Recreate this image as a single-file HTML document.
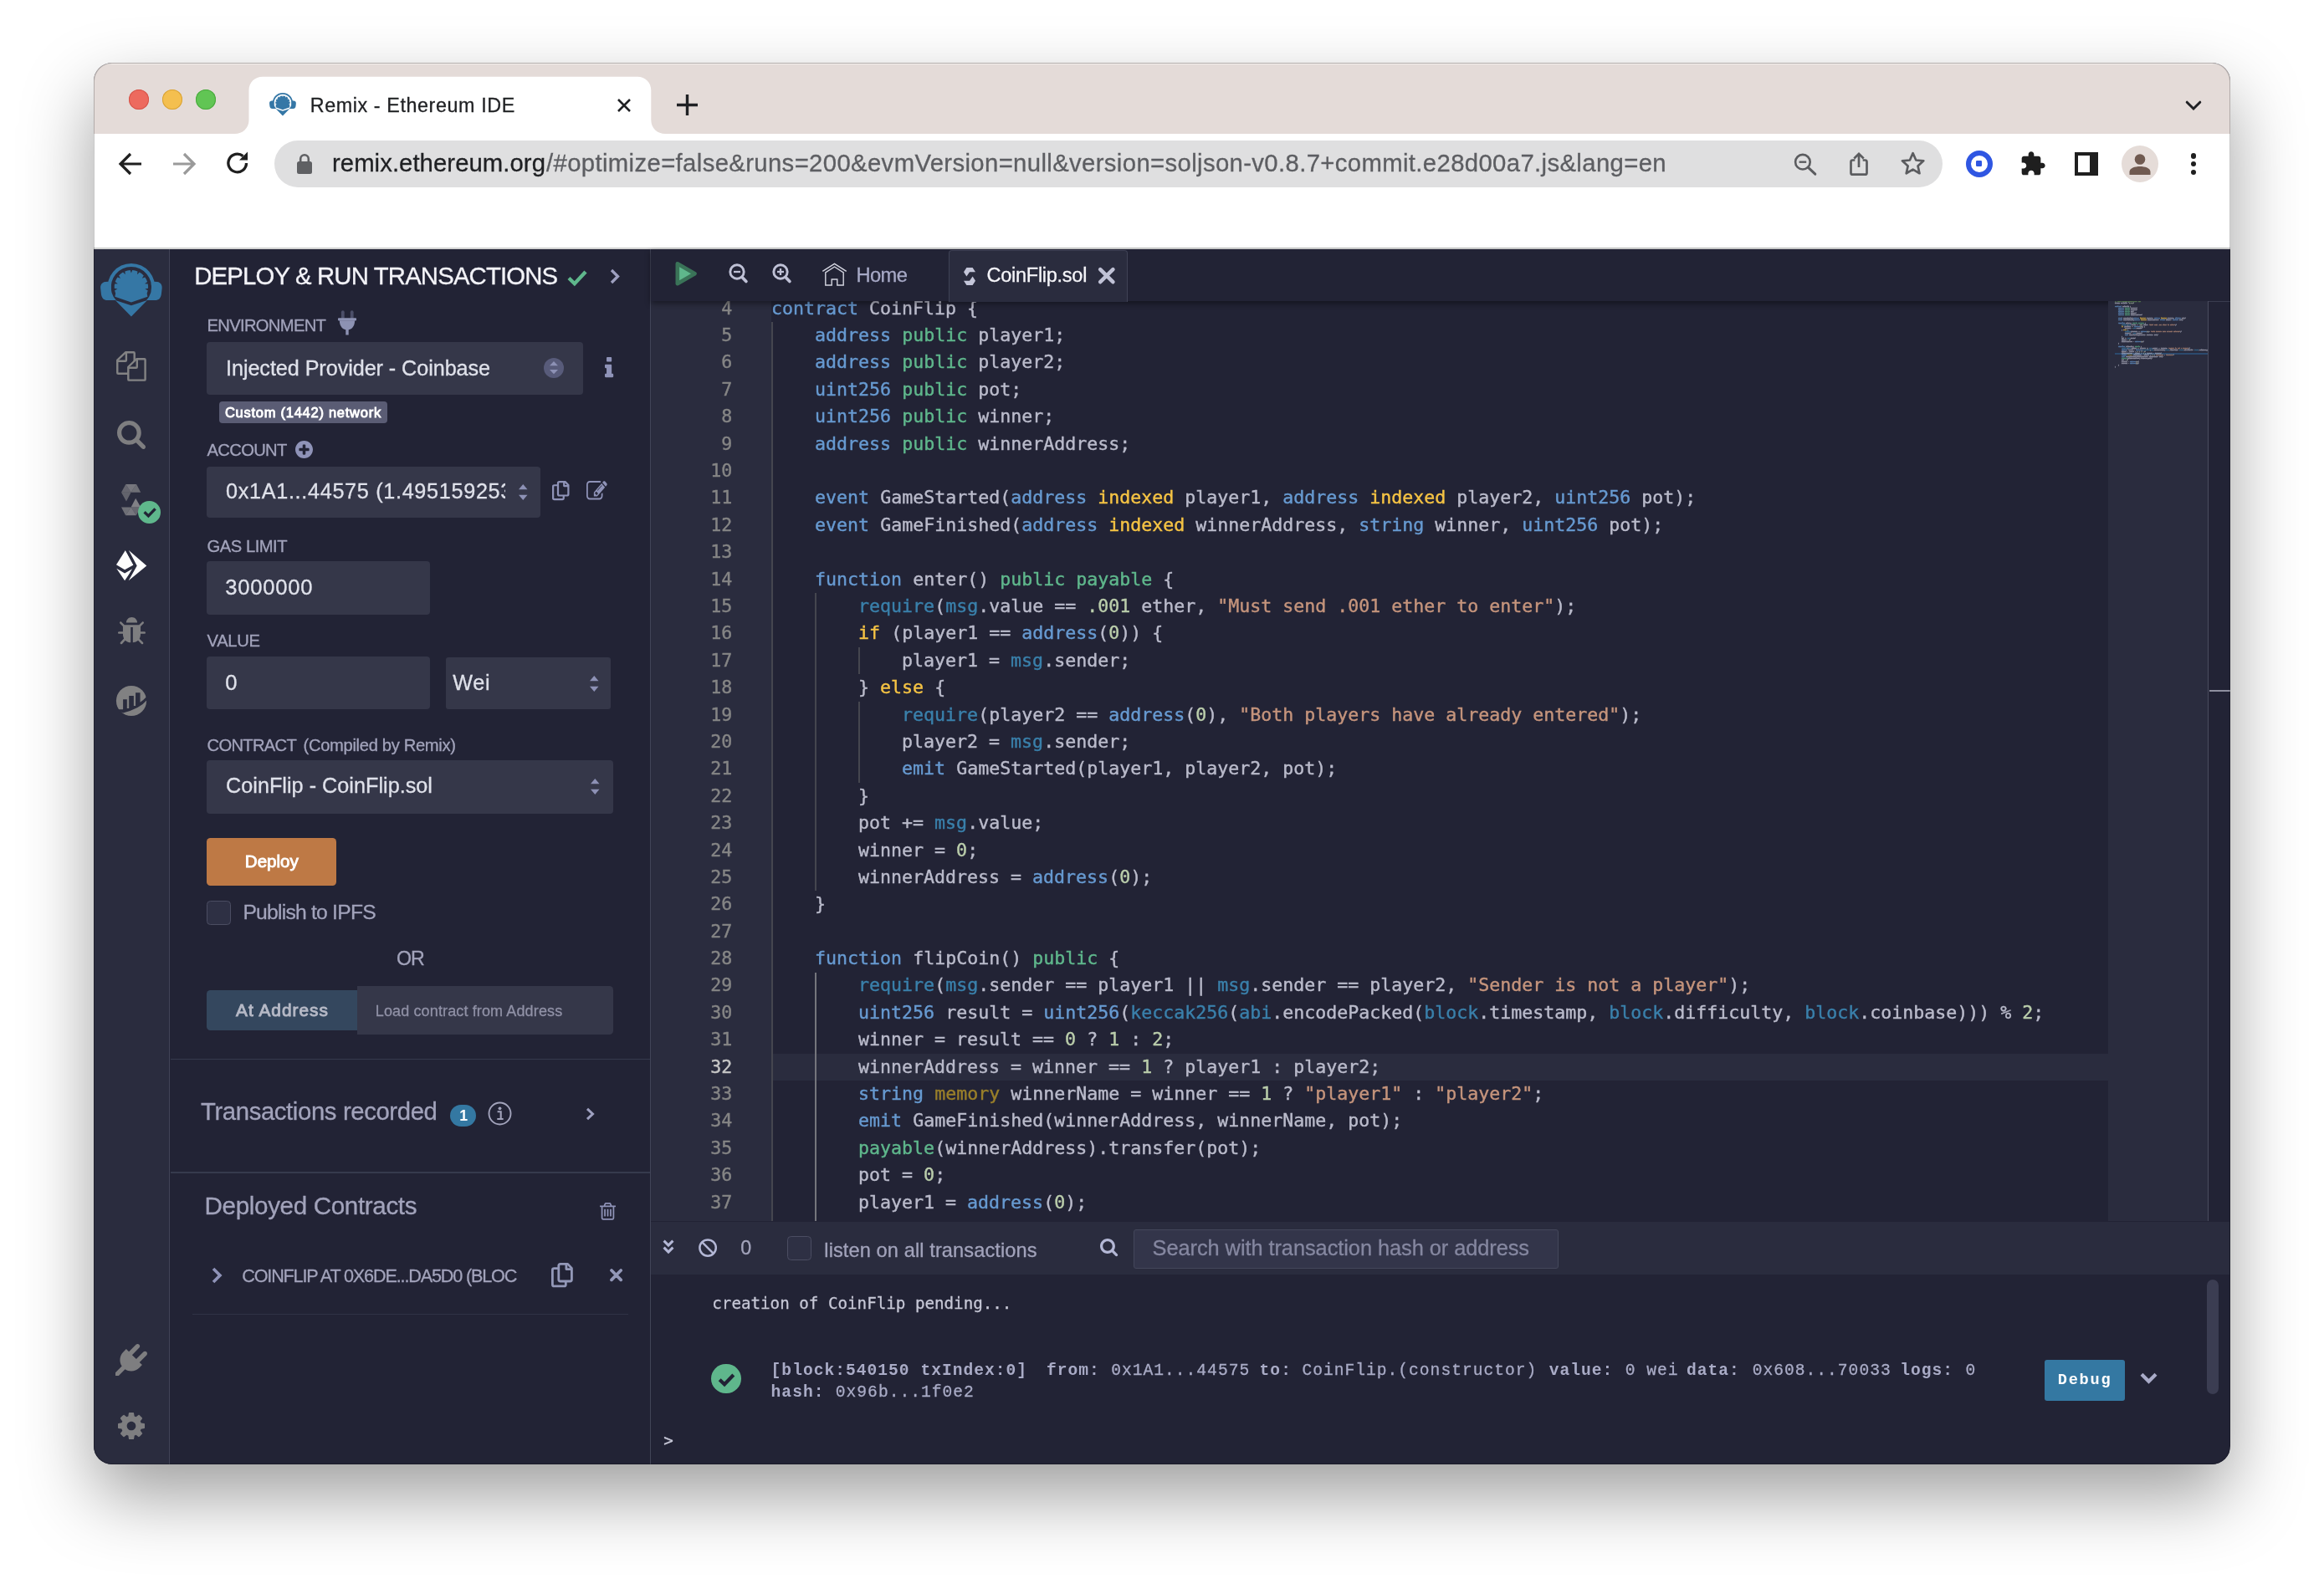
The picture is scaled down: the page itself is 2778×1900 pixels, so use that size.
<!DOCTYPE html>
<html lang="en"><head><meta charset="utf-8"><title>Remix - Ethereum IDE</title>
<style>
html,body{margin:0;padding:0;background:#fff;}
body{width:2778px;height:1900px;overflow:hidden;position:relative;font-family:"Liberation Sans",sans-serif;}
#win{position:absolute;left:112px;top:75px;width:2554px;height:1676px;border-radius:22px;overflow:hidden;background:#222335;
 box-shadow:0 38px 85px rgba(0,0,0,.38);}
#o{position:absolute;left:-112px;top:-75px;width:2778px;height:1900px;will-change:transform;}
#o div,#o svg.i,#o pre,.t{position:absolute;}
.t{white-space:pre;margin:0;padding:0;-webkit-text-stroke:0.3px;}
svg.i{overflow:visible;}
#ring{position:absolute;left:0;top:0;right:0;bottom:0;border-radius:22px;box-shadow:inset 0 0 0 1px rgba(0,0,0,.21);}
.code,.nums{-webkit-text-stroke:0.4px;margin:0;font:21.6px/32.4px 'DejaVu Sans Mono','Liberation Mono',monospace;color:#babbcb;white-space:pre;}
.code .cl,.nums .ln{position:static !important;height:32.4px;}
.nums{text-align:right;color:#858585;}
.nums .cur{color:#c6c6c6;}
.code span{position:static;}
.k{color:#679ad1}.g{color:#5fb78c}.y{color:#f5c344}.l{color:#997f2a}.m{color:#3a80ab}.s{color:#c5947c}.n{color:#bacdab}
.c{color:#6a9955}

</style></head>
<body>
<div id="win"><div id="o">
<div style="left:112px;top:75px;width:2554px;height:85px;background:#e4dbd8;"></div>
<div style="left:112px;top:76px;width:2554px;height:1px;background:rgba(255,255,255,.55);"></div>
<div style="left:112px;top:160px;width:2554px;height:138px;background:#ffffff;"></div>
<div style="left:112px;top:296px;width:2554px;height:1px;background:#cbcccb;"></div>
<div style="left:112px;top:297px;width:2554px;height:1px;background:#d9d9d9;"></div>
<div style="left:153.7px;top:107px;width:24px;height:24px;background:#ed6a5e;border-radius:50%;box-shadow:inset 0 0 0 1px #d5544a;"></div>
<div style="left:193.7px;top:107px;width:24px;height:24px;background:#f4bf4f;border-radius:50%;box-shadow:inset 0 0 0 1px #d8a236;"></div>
<div style="left:233.8px;top:107px;width:24px;height:24px;background:#61c554;border-radius:50%;box-shadow:inset 0 0 0 1px #4aa93e;"></div>
<svg class="i" style="left:0px;top:0px;width:2778px;height:200px;" viewBox="0 0 2778 200"><path fill="#fff" d="M280.5 160 C290 160 297.500 153.500 297.500 143.500 L297.500 108 C297.500 98.500 304.500 91.700 314 91.700 L761.800 91.700 C771.300 91.700 778.300 98.500 778.300 108 L778.300 143.500 C778.300 153.500 785.800 160 795.300 160 Z"/></svg>
<svg class="i" style="left:322px;top:111.4px;width:32px;height:27.7px" viewBox="0 0 74 64" fill="#3577a6"><g id="lg0"><path d="M36.90 46.60L17.40 39.80L18.17 35.77A20.2 20.2 0 0 1 17.11 32.26L20.46 30.51L16.76 29.75A20.2 20.2 0 0 1 17.03 24.55L20.79 24.18L17.65 22.09A20.2 20.2 0 0 1 20.43 16.50L24.00 17.75L22.03 14.53A20.2 20.2 0 0 1 27.08 10.55L29.75 13.22L29.37 9.46A20.2 20.2 0 0 1 35.63 8.04L36.90 11.60L38.17 8.04A20.2 20.2 0 0 1 44.43 9.46L44.05 13.22L46.72 10.55A20.2 20.2 0 0 1 51.77 14.53L49.80 17.75L53.37 16.50A20.2 20.2 0 0 1 56.15 22.09L53.01 24.18L56.77 24.55A20.2 20.2 0 0 1 57.04 29.75L53.34 30.51L56.69 32.26A20.2 20.2 0 0 1 55.63 35.77L56.40 39.80Z"/><path d="M17.8 44L36.9 50.300L56 44L36.9 63.500Z"/><path d="M9.03 33.11A28.3 28.3 0 1 1 64.77 33.11L60.73 32.40A24.2 24.2 0 1 0 13.07 32.40Z"/><path d="M13.07 24.00L9.50 21.700L5.80 22.100C1.60 22.600 0.00 26 0.15 29.500L0.90 36.500C1.60 41.500 4.00 44.100 8.50 44.100L18.78 44.100A24.2 24.2 0 0 1 13.07 24.00Z"/><path d="M60.73 24.00L64.30 21.700L68.00 22.100C72.20 22.600 73.80 26 73.65 29.500L72.90 36.500C72.20 41.500 69.80 44.100 65.30 44.100L55.02 44.100A24.2 24.2 0 0 0 60.73 24.00Z"/></g></svg>
<span class="t" style="left:370.8px;top:126.12px;font:400 23.3px/0 'Liberation Sans', sans-serif;color:#1f2023;letter-spacing:0.598px;">Remix - Ethereum IDE</span>
<svg class="i" style="left:737px;top:117px;width:18px;height:18px;" viewBox="0 0 18 18"><path d="M2 2 L16 16 M16 2 L2 16" stroke="#202124" stroke-width="2.6" fill="none"/></svg>
<svg class="i" style="left:808px;top:112px;width:27px;height:27px;" viewBox="0 0 27 27"><path d="M13.5 1 V26 M1 13.5 H26" stroke="#202124" stroke-width="3.4" fill="none"/></svg>
<svg class="i" style="left:2612px;top:120.3px;width:20px;height:12px;" viewBox="0 0 20 12"><path d="M2.2 2.200 L10 10 L17.800 2.200" stroke="#202124" stroke-width="3" fill="none" stroke-linecap="round"/></svg>
<svg class="i" style="left:141px;top:181px;width:30px;height:30px;" viewBox="0 0 30 30"><path d="M28 15 H4 M15 3 L3 15 L15 27" stroke="#1f1f1f" stroke-width="3.2" fill="none"/></svg>
<svg class="i" style="left:205px;top:181px;width:30px;height:30px;" viewBox="0 0 30 30"><path d="M2 15 H26 M15 3 L27 15 L15 27" stroke="#9a9a9a" stroke-width="3.2" fill="none"/></svg>
<svg class="i" style="left:269px;top:180px;width:30px;height:30px;" viewBox="0 0 30 30"><path d="M25.5 15 A10.8 10.8 0 1 1 21.5 6.6" stroke="#1f1f1f" stroke-width="3.3" fill="none"/><path d="M27 1.5 V11.5 H17 Z" fill="#1f1f1f"/></svg>
<div style="left:328px;top:168px;width:1994px;height:56px;background:#dfdfe0;border-radius:28px;"></div>
<svg class="i" style="left:355px;top:183px;width:18px;height:25px;" viewBox="0 0 18 25"><rect x="0" y="10" width="18" height="15" rx="2.5" fill="#5f6063"/><path d="M4.2 11 V7 A4.8 4.8 0 0 1 13.8 7 V11" stroke="#5f6063" stroke-width="2.6" fill="none"/></svg>
<span class="t" style="left:397px;top:195.44px;font:400 29.3px/0 'Liberation Sans', sans-serif;color:#1f2023;letter-spacing:0.055px;">remix.ethereum.org</span>
<span class="t" style="left:653px;top:195.44px;font:400 29.3px/0 'Liberation Sans', sans-serif;color:#5d5e62;letter-spacing:0.361px;">/#optimize=false&amp;runs=200&amp;evmVersion=null&amp;version=soljson-v0.8.7+commit.e28d00a7.js&amp;lang=en</span>
<svg class="i" style="left:2142px;top:180px;width:34px;height:34px;" viewBox="0 0 34 34"><circle cx="12.9" cy="13.700" r="8.800" stroke="#5b5c5f" stroke-width="2.6" fill="none"/><path d="M19.3 20.100 L27.800 28.200" stroke="#5b5c5f" stroke-width="3" stroke-linecap="round"/><path d="M8.6 13.700 H17.200" stroke="#5b5c5f" stroke-width="2.4"/></svg>
<svg class="i" style="left:2209px;top:176px;width:26px;height:36px;" viewBox="0 0 26 36"><path d="M8.3 15.500 H5.500 Q3.500 15.500 3.500 17.500 V30.700 Q3.500 32.700 5.500 32.700 H20.500 Q22.500 32.700 22.500 30.700 V17.500 Q22.500 15.500 20.500 15.500 H17.700" stroke="#5b5c5f" stroke-width="2.7" fill="none"/><path d="M13 24 V8.500 M7.300 13.500 L13 7.800 L18.700 13.500" stroke="#5b5c5f" stroke-width="2.7" fill="none"/></svg>
<svg class="i" style="left:2271.5px;top:181.1px;width:29.2px;height:28.3px;" viewBox="0 0 34 33"><path d="M17 2.500 L21.300 12.200 L31.800 13.200 L23.900 20.300 L26.200 30.600 L17 25.200 L7.800 30.600 L10.100 20.300 L2.200 13.200 L12.700 12.200 Z" stroke="#5b5c5f" stroke-width="3.1" fill="none" stroke-linejoin="round"/></svg>
<div style="left:2349.7px;top:179.5px;width:32px;height:32px;background:#ffffff;border-radius:50%;border:6.3px solid #2f56e2;box-sizing:border-box;"></div>
<div style="left:2362.4px;top:192.2px;width:6.6px;height:6.6px;background:#2f56e2;border-radius:1.2px;"></div>
<svg class="i" style="left:2413.5px;top:179.5px;width:32px;height:32px;" viewBox="0 0 24 24"><path fill="#1f1f1f" d="M20.5 11H19V7c0-1.100-.900-2-2-2h-4V3.500C13 2.120 11.880 1 10.500 1S8 2.120 8 3.500V5H4c-1.100 0-1.990.900-1.990 2v3.800H3.500c1.490 0 2.700 1.210 2.700 2.700s-1.210 2.700-2.700 2.700H2V20c0 1.100.900 2 2 2h3.800v-1.500c0-1.490 1.210-2.700 2.700-2.700 1.490 0 2.700 1.210 2.700 2.700V22H17c1.100 0 2-.900 2-2v-4h1.500c1.380 0 2.500-1.120 2.500-2.500S21.880 11 20.500 11z"/></svg>
<div style="left:2480px;top:182.3px;width:27.5px;height:27.4px;background:#fff;border:4px solid #1f1f1f;box-sizing:border-box;"></div>
<div style="left:2498px;top:182.3px;width:9.5px;height:27.4px;background:#1f1f1f;"></div>
<div style="left:2536px;top:174px;width:44px;height:44px;background:#e5dcd8;border-radius:50%;"></div>
<svg class="i" style="left:2544.2px;top:183.3px;width:28px;height:27px;" viewBox="0 0 28 27"><circle cx="14" cy="7.500" r="6.300" fill="#705a50"/><path d="M1.500 26 V22.500 C1.500 18 8 16 14 16 S26.500 18 26.500 22.500 V26 Z" fill="#705a50"/></svg>
<div style="left:2618.6px;top:183.0px;width:6.6px;height:6.6px;background:#1f1f1f;border-radius:50%;"></div>
<div style="left:2618.6px;top:192.7px;width:6.6px;height:6.6px;background:#1f1f1f;border-radius:50%;"></div>
<div style="left:2618.6px;top:202.5px;width:6.6px;height:6.6px;background:#1f1f1f;border-radius:50%;"></div>
<div style="left:112px;top:298px;width:90px;height:1453px;background:#2a2c3e;"></div>
<div style="left:202px;top:298px;width:1px;height:1453px;background:#414457;"></div>
<div style="left:203px;top:298px;width:574.5px;height:1453px;background:#222335;"></div>
<div style="left:777px;top:298px;width:1px;height:1453px;background:#414457;"></div>
<svg class="i" style="left:119.6px;top:314.8px;width:74px;height:64px" viewBox="0 0 74 64" fill="#3577a5"><g id="lg1"><path d="M36.90 46.60L17.40 39.80L18.17 35.77A20.2 20.2 0 0 1 17.11 32.26L20.46 30.51L16.76 29.75A20.2 20.2 0 0 1 17.03 24.55L20.79 24.18L17.65 22.09A20.2 20.2 0 0 1 20.43 16.50L24.00 17.75L22.03 14.53A20.2 20.2 0 0 1 27.08 10.55L29.75 13.22L29.37 9.46A20.2 20.2 0 0 1 35.63 8.04L36.90 11.60L38.17 8.04A20.2 20.2 0 0 1 44.43 9.46L44.05 13.22L46.72 10.55A20.2 20.2 0 0 1 51.77 14.53L49.80 17.75L53.37 16.50A20.2 20.2 0 0 1 56.15 22.09L53.01 24.18L56.77 24.55A20.2 20.2 0 0 1 57.04 29.75L53.34 30.51L56.69 32.26A20.2 20.2 0 0 1 55.63 35.77L56.40 39.80Z"/><path d="M17.8 44L36.9 50.300L56 44L36.9 63.500Z"/><path d="M9.03 33.11A28.3 28.3 0 1 1 64.77 33.11L60.73 32.40A24.2 24.2 0 1 0 13.07 32.40Z"/><path d="M13.07 24.00L9.50 21.700L5.80 22.100C1.60 22.600 0.00 26 0.15 29.500L0.90 36.500C1.60 41.500 4.00 44.100 8.50 44.100L18.78 44.100A24.2 24.2 0 0 1 13.07 24.00Z"/><path d="M60.73 24.00L64.30 21.700L68.00 22.100C72.20 22.600 73.80 26 73.65 29.500L72.90 36.500C72.20 41.500 69.80 44.100 65.30 44.100L55.02 44.100A24.2 24.2 0 0 0 60.73 24.00Z"/></g></svg>
<svg class="i" style="left:139px;top:420px;width:36px;height:36px;" viewBox="0 0 36 36"><g stroke="#838384" stroke-width="2.4" fill="none" stroke-linejoin="round" stroke-linecap="round"><path d="M11.3 1.200 H20.700 Q21.700 1.200 21.700 2.200 V26.700 H2.250 Q1.250 26.700 1.250 25.700 V10.600 Z"/><path d="M1.6 11.700 H10.900 Q11.900 11.700 11.900 10.700 V1.500"/><path fill="#2a2c3e" d="M24.2 9.250 H33.600 Q34.600 9.250 34.600 10.250 V33.650 Q34.600 34.650 33.600 34.650 H15.300 Q14.300 34.650 14.300 33.650 V18.750 Z"/><path d="M14.6 19.700 H23.800 Q24.800 19.700 24.800 18.700 V9.600"/></g></svg>
<svg class="i" style="left:140.00px;top:502.50px;width:34.00px;height:34.00px;" viewBox="0 -1408 1664 1664" preserveAspectRatio="none"><path fill="#7e7e80" transform="scale(1,-1)" d="M1152 704C1152 457 951 256 704 256C457 256 256 457 256 704C256 951 457 1152 704 1152C951 1152 1152 951 1152 704ZM1664 -128C1664 -94 1650 -61 1627 -38L1284 305C1365 422 1408 562 1408 704C1408 1093 1093 1408 704 1408C315 1408 0 1093 0 704C0 315 315 0 704 0C846 0 986 43 1103 124L1446 -218C1469 -242 1502 -256 1536 -256C1606 -256 1664 -198 1664 -128Z"/></svg>
<svg class="i" style="left:145px;top:579px;width:23.2px;height:37.2px;" viewBox="0 0 23.200 37.200"><g fill="#8b8b8e"><path opacity=".62" d="M5.3 0 L0 9.800 H11.600 Z"/><path opacity=".8" d="M5.3 0 H18.100 L11.600 9.800 Z"/><path opacity=".7" d="M18.1 0 L23.200 9.800 H11.600 Z"/><path opacity=".58" d="M0 9.800 H11.600 L6 20.400 Z"/><path opacity=".62" d="M17.900 37.200 L23.200 27.400 H11.600 Z"/><path opacity=".8" d="M17.900 37.200 H5.100 L11.600 27.400 Z"/><path opacity=".7" d="M5.100 37.200 L0 27.400 H11.600 Z"/><path opacity=".9" d="M23.200 27.400 H11.600 L17.200 16.800 Z"/></g></svg>
<div style="left:165.3px;top:599.2px;width:26.6px;height:26.6px;background:#5fb78c;border-radius:50%;"></div>
<svg class="i" style="left:170.6px;top:606.4px;width:16px;height:13px;" viewBox="0 0 16 13"><path d="M1.6 6.300 L6.400 11 L14.600 2.400" stroke="#222335" stroke-width="3.3" fill="none" stroke-linecap="butt"/></svg>
<svg class="i" style="left:139px;top:658px;width:36.4px;height:36.4px;" viewBox="0 0 36.400 36.400"><g fill="#fdfdfd"><path d="M10.9 0 L0 17.200 L10.100 23.200 L20.600 17.400 Z"/><path d="M0.3 21.800 L10.100 27.600 L20 21.800 L10.100 36.300 Z"/></g><path d="M12.3 -1 L22.800 18.400 L12.600 37.400" stroke="#2a2c3e" stroke-width="3.2" fill="none"/><path d="M14.9 0 L36.300 18.400 L14.700 36.300 L24.700 18.400 Z" fill="#fdfdfd"/></svg>
<svg class="i" style="left:140.50px;top:738.33px;width:33.00px;height:32.34px;" viewBox="32 -1472 1600 1568" preserveAspectRatio="none"><path fill="#7e7e80" transform="scale(1,-1)" d="M1632 576C1632 611 1603 640 1568 640H1344C1344 768 1344 868 1344 934L1517 1107C1542 1132 1542 1172 1517 1197C1492 1222 1452 1222 1427 1197L1254 1024H410L237 1197C212 1222 172 1222 147 1197C122 1172 122 1132 147 1107L320 934C320 868 320 768 320 640H96C61 640 32 611 32 576C32 541 61 512 96 512H320C320 396 343 307 378 238L176 11C153 -16 155 -56 181 -80C194 -91 209 -96 224 -96C242 -96 259 -89 272 -75L455 132C455 132 587 0 768 0V896H896V0C1066 0 1197 120 1197 120L1395 -77C1407 -90 1424 -96 1440 -96C1456 -96 1473 -90 1485 -77C1510 -52 1510 -12 1485 13L1277 222C1317 293 1344 387 1344 512H1568C1603 512 1632 541 1632 576ZM1152 1152C1152 1329 1009 1472 832 1472C655 1472 512 1329 512 1152H1152Z"/></svg>
<svg class="i" style="left:139px;top:820px;width:36px;height:36px;" viewBox="0 0 36 36"><circle cx="18" cy="18" r="18.100" fill="#818182"/><path fill="#2a2c3e" d="M1.500 28.200 H8.100 V16.200 H12.800 V26.900 H15.200 V12.100 H20.850 V24.100 H23.050 V8.200 H28.550 V19.700 Q32.500 17 36.800 12.400 L37.200 16.600 Q28 27.800 8.100 32.400 Q3.500 31 1.500 28.200 Z"/></svg>
<svg class="i" style="left:138px;top:1607px;width:38px;height:38px" viewBox="0 -1536 1792 1792"><path fill="#7e7e80" transform="scale(1,-1)" d="M1755 1083C1705 1133 1624 1133 1574 1083L1173 683L939 917L1339 1318C1389 1367 1389 1449 1339 1499C1289 1548 1208 1548 1158 1499L758 1098L608 1248L448 1088C229 869 198 535 362 287L0 -75V-256H181L543 106C791 -58 1125 -27 1344 192L1504 352L1354 502L1755 902C1804 952 1804 1033 1755 1083Z"/></svg>
<svg class="i" style="left:141.00px;top:1689.00px;width:32.00px;height:32.00px;" viewBox="0 -1408 1536 1536" preserveAspectRatio="none"><path fill="#7e7e80" transform="scale(1,-1)" d="M1024 640C1024 499 909 384 768 384C627 384 512 499 512 640C512 781 627 896 768 896C909 896 1024 781 1024 640ZM1536 749C1536 766 1524 782 1507 785L1324 813C1314 846 1300 879 1283 911C1317 958 1354 1002 1388 1048C1393 1055 1396 1062 1396 1071C1396 1079 1394 1087 1389 1093C1347 1152 1277 1214 1224 1263C1217 1269 1208 1273 1199 1273C1190 1273 1181 1270 1175 1264L1033 1157C1004 1172 974 1184 943 1194L915 1378C913 1395 897 1408 879 1408H657C639 1408 625 1396 621 1380C605 1320 599 1255 592 1194C561 1184 530 1171 501 1156L363 1263C355 1269 346 1273 337 1273C303 1273 168 1127 144 1094C139 1087 135 1080 135 1071C135 1062 139 1054 145 1047C182 1002 218 957 252 909C236 879 223 849 213 817L27 789C12 786 0 768 0 753V531C0 514 12 498 29 495L212 468C222 434 236 401 253 369C219 322 182 278 148 232C143 225 140 218 140 209C140 201 142 193 147 186C189 128 259 66 312 18C319 11 328 7 337 7C346 7 355 10 362 16L503 123C532 108 562 96 593 86L621 -98C623 -115 639 -128 657 -128H879C897 -128 911 -116 915 -100C931 -40 937 25 944 86C975 96 1006 109 1035 124L1173 16C1181 11 1190 7 1199 7C1233 7 1368 154 1392 186C1398 193 1401 200 1401 209C1401 218 1397 227 1391 234C1354 279 1318 323 1284 372C1300 401 1312 431 1323 463L1508 491C1524 494 1536 512 1536 527Z"/></svg>
<span class="t" style="left:232.3px;top:330.14px;font:400 29.3px/0 'Liberation Sans', sans-serif;color:#f3f3f8;letter-spacing:-0.830px;">DEPLOY &amp; RUN TRANSACTIONS</span>
<svg class="i" style="left:677.5px;top:322px;width:24px;height:20px;" viewBox="0 0 24 20"><path d="M2 10.500 L8.800 17.200 L22 3" stroke="#5fb78c" stroke-width="4.4" fill="none"/></svg>
<svg class="i" style="left:729px;top:321px;width:12px;height:19px;" viewBox="0 0 12 19"><path d="M2 2 L9.500 9.500 L2 17" stroke="#9ea0c0" stroke-width="3.3" fill="none"/></svg>
<span class="t" style="left:247.6px;top:389.0px;font:400 20.2px/0 'Liberation Sans', sans-serif;color:#a2a3bb;letter-spacing:-0.688px;">ENVIRONMENT</span>
<svg class="i" style="left:404.2px;top:370.5px;width:22px;height:30px;" viewBox="0 0 22 30"><rect x="3.9" y="0.300" width="3.800" height="10" rx="1.900" fill="#4c4f69"/><rect x="14.8" y="0.300" width="3.800" height="10" rx="1.900" fill="#4c4f69"/><rect x="0" y="9.300" width="22" height="3.100" rx="0.800" fill="#8d92b3"/><path d="M1.9 12.300 H20.100 C20.100 19.800 15.800 23.500 11 23.500 C6.200 23.500 1.900 19.800 1.900 12.300 Z" fill="#8d92b3"/><rect x="9.300" y="22.800" width="3.400" height="6.700" fill="#8d92b3"/></svg>
<div style="left:247px;top:409.3px;width:449.7px;height:63.2px;background:#353749;border-radius:4px;"></div>
<span class="t" style="left:270px;top:439.96px;font:400 25.2px/0 'Liberation Sans', sans-serif;color:#dfe1ea;letter-spacing:-0.065px;">Injected Provider - Coinbase</span>
<div style="left:649.7px;top:427.7px;width:24px;height:24px;background:#585b7a;border-radius:50%;"></div>
<svg class="i" style="left:656.7px;top:432.09999999999997px;width:10px;height:15.2px;" viewBox="0 0 10 15.2"><path d="M0 5.3 L5.0 0 L10 5.3 Z M0 9.899999999999999 L5.0 15.2 L10 9.899999999999999 Z" fill="#8d91b5"/></svg>
<svg class="i" style="left:723.20px;top:427.00px;width:10.20px;height:24.20px;" viewBox="0 -1408 640 1408" preserveAspectRatio="none"><path fill="#8f93b8" transform="scale(1,-1)" d="M640 192C640 227 611 256 576 256H512V832C512 867 483 896 448 896H64C29 896 0 867 0 832V704C0 669 29 640 64 640H128V256H64C29 256 0 227 0 192V64C0 29 29 0 64 0H576C611 0 640 29 640 64ZM512 1344C512 1379 483 1408 448 1408H192C157 1408 128 1379 128 1344V1152C128 1117 157 1088 192 1088H448C483 1088 512 1117 512 1152Z"/></svg>
<div style="left:262px;top:480.4px;width:201px;height:25.3px;background:#5a5c74;border-radius:4px;"></div>
<span class="t" style="left:268.9px;top:493.18px;font:400 16.5px/0 'Liberation Sans', sans-serif;color:#ffffff;letter-spacing:0.738px;-webkit-text-stroke:0.9px;">Custom (1442) network</span>
<span class="t" style="left:247.6px;top:538.4px;font:400 20.2px/0 'Liberation Sans', sans-serif;color:#a2a3bb;letter-spacing:-0.690px;">ACCOUNT</span>
<svg class="i" style="left:352.50px;top:526.50px;width:21.00px;height:21.00px;" viewBox="0 -1408 1536 1536" preserveAspectRatio="none"><path fill="#8f93b8" transform="scale(1,-1)" d="M1216 576C1216 541 1187 512 1152 512H896V256C896 221 867 192 832 192H704C669 192 640 221 640 256V512H384C349 512 320 541 320 576V704C320 739 349 768 384 768H640V1024C640 1059 669 1088 704 1088H832C867 1088 896 1059 896 1024V768H1152C1187 768 1216 739 1216 704V576ZM1536 640C1536 1064 1192 1408 768 1408C344 1408 0 1064 0 640C0 216 344 -128 768 -128C1192 -128 1536 216 1536 640Z"/></svg>
<div style="left:247px;top:558px;width:398.8px;height:60.6px;background:#353749;border-radius:4px;"></div>
<div style="left:270px;top:566px;width:335px;height:46px;overflow:hidden;"></div>
<span class="t" style="left:270px;top:586.96px;font:400 25.2px/0 'Liberation Sans', sans-serif;color:#dfe1ea;letter-spacing:0.695px;">0x1A1...44575 (1.495159253</span>
<div style="left:604px;top:560px;width:41.8px;height:56px;background:#353749;"></div>
<svg class="i" style="left:620.35px;top:578.5px;width:10.5px;height:19.0px;" viewBox="0 0 10.5 19.0"><path d="M0 6.2 L5.25 0 L10.5 6.2 Z M0 12.8 L5.25 19.0 L10.5 12.8 Z" fill="#8d91b5"/></svg>
<svg class="i" style="left:659.5px;top:574.7px;width:20.5px;height:23.3px;" viewBox="0 0 25.800 29.300"><g stroke="#8f93b8" stroke-width="2.8" fill="none" stroke-linejoin="round"><path d="M10.8 1.400 H19.600 L24.400 6.400 V20 Q24.400 22 22.400 22 H10.800 Q8.800 22 8.800 20 V3.400 Q8.800 1.400 10.800 1.400 Z"/><path d="M17.9 1.400 V7.600 H24.400"/><path d="M8.8 6.600 H3.400 Q1.400 6.600 1.400 8.600 V25.900 Q1.400 27.900 3.400 27.900 H15.300 Q17.300 27.900 17.300 25.900 V22"/></g></svg>
<svg class="i" style="left:701.00px;top:575.40px;width:24.70px;height:22.60px;" viewBox="0 -1408 1783.75 1408" preserveAspectRatio="none"><path fill="#8f93b8" transform="scale(1,-1)" d="M888 352H832V448H736V504L852 620L1004 468ZM1328 1072C1337 1063 1336 1048 1327 1039L977 689C968 680 953 679 944 688C935 697 936 712 945 721L1295 1071C1304 1080 1319 1081 1328 1072ZM1408 478C1408 491 1400 502 1388 507C1376 512 1363 510 1353 500L1289 436C1283 430 1280 422 1280 414V288C1280 200 1208 128 1120 128H288C200 128 128 200 128 288V1120C128 1208 200 1280 288 1280H1120C1135 1280 1150 1278 1165 1274C1176 1270 1188 1273 1197 1282L1246 1331C1254 1339 1257 1349 1255 1360C1253 1370 1246 1379 1237 1383C1200 1400 1160 1408 1120 1408H288C129 1408 0 1279 0 1120V288C0 129 129 0 288 0H1120C1279 0 1408 129 1408 288ZM1312 1216 640 544V256H928L1600 928ZM1756 1084C1793 1121 1793 1183 1756 1220L1604 1372C1567 1409 1505 1409 1468 1372L1376 1280L1664 992L1756 1084Z"/></svg>
<span class="t" style="left:247.6px;top:652.5px;font:400 20.2px/0 'Liberation Sans', sans-serif;color:#a2a3bb;letter-spacing:-0.483px;">GAS LIMIT</span>
<div style="left:247px;top:671px;width:267px;height:63.6px;background:#353749;border-radius:4px;"></div>
<span class="t" style="left:269.3px;top:701.92px;font:400 25.6px/0 'Liberation Sans', sans-serif;color:#dfe1ea;letter-spacing:0.766px;">3000000</span>
<span class="t" style="left:247.6px;top:765.5px;font:400 20.2px/0 'Liberation Sans', sans-serif;color:#a2a3bb;letter-spacing:-0.341px;">VALUE</span>
<div style="left:247px;top:785.2px;width:267px;height:63.2px;background:#353749;border-radius:4px;"></div>
<span class="t" style="left:269.3px;top:816.12px;font:400 25.6px/0 'Liberation Sans', sans-serif;color:#dfe1ea;">0</span>
<div style="left:532.8px;top:786.4px;width:197px;height:61.4px;background:#353749;border-radius:3px;"></div>
<span class="t" style="left:541.3px;top:815.76px;font:400 25.2px/0 'Liberation Sans', sans-serif;color:#dfe1ea;letter-spacing:0.693px;">Wei</span>
<svg class="i" style="left:704.75px;top:807.5px;width:10.5px;height:19.0px;" viewBox="0 0 10.5 19.0"><path d="M0 6.2 L5.25 0 L10.5 6.2 Z M0 12.8 L5.25 19.0 L10.5 12.8 Z" fill="#8d91b5"/></svg>
<span class="t" style="left:247.6px;top:891.0px;font:400 20.2px/0 'Liberation Sans', sans-serif;color:#a2a3bb;letter-spacing:-0.707px;">CONTRACT</span>
<span class="t" style="left:362.6px;top:891.0px;font:400 20.2px/0 'Liberation Sans', sans-serif;color:#a2a3bb;letter-spacing:-0.340px;">(Compiled by Remix)</span>
<div style="left:247px;top:909px;width:485.8px;height:63.8px;background:#353749;border-radius:4px;"></div>
<span class="t" style="left:270px;top:939.06px;font:400 25.2px/0 'Liberation Sans', sans-serif;color:#dfe1ea;letter-spacing:0.028px;">CoinFlip - CoinFlip.sol</span>
<svg class="i" style="left:706.45px;top:931.0px;width:10.5px;height:19.0px;" viewBox="0 0 10.5 19.0"><path d="M0 6.2 L5.25 0 L10.5 6.2 Z M0 12.8 L5.25 19.0 L10.5 12.8 Z" fill="#8d91b5"/></svg>
<div style="left:247px;top:1002px;width:154.8px;height:56.7px;background:#be7945;border-radius:4.5px;"></div>
<span class="t" style="left:292.8px;top:1030.16px;font:400 20.6px/0 'Liberation Sans', sans-serif;color:#ffffff;letter-spacing:-0.018px;-webkit-text-stroke:0.9px;">Deploy</span>
<div style="left:247px;top:1077.3px;width:29px;height:28.4px;background:#2e3044;border-radius:4.5px;border:1.5px solid #4b4d62;box-sizing:border-box;"></div>
<span class="t" style="left:290.4px;top:1091.44px;font:400 24.7px/0 'Liberation Sans', sans-serif;color:#a2a3bb;letter-spacing:-0.777px;">Publish to IPFS</span>
<span class="t" style="left:474px;top:1145.96px;font:400 23.2px/0 'Liberation Sans', sans-serif;color:#a2a3bb;letter-spacing:-1.141px;">OR</span>
<div style="left:247px;top:1184.3px;width:180px;height:47.3px;background:#34475e;border-radius:4.5px 0 0 4.5px;"></div>
<span class="t" style="left:282px;top:1207.79px;font:400 20.8px/0 'Liberation Sans', sans-serif;color:#b6b9c6;letter-spacing:1.042px;-webkit-text-stroke:0.9px;">At Address</span>
<div style="left:427px;top:1179px;width:305.8px;height:58px;background:#353749;border-radius:0 4.5px 4.5px 0;"></div>
<span class="t" style="left:448.8px;top:1208.76px;font:400 18px/0 'Liberation Sans', sans-serif;color:#9091a6;letter-spacing:0.130px;">Load contract from Address</span>
<div style="left:203.5px;top:1265.5px;width:573.5px;height:1.5px;background:#363a4d;"></div>
<span class="t" style="left:240px;top:1329.24px;font:400 29.3px/0 'Liberation Sans', sans-serif;color:#a2a3bb;letter-spacing:-0.376px;">Transactions recorded</span>
<div style="left:538px;top:1320.7px;width:30.6px;height:26px;background:#3478a2;border-radius:13px;"></div>
<span class="t" style="left:549.3px;top:1334.2px;font:700 17.6px/0 'Liberation Sans', sans-serif;color:#ffffff;-webkit-text-stroke:0;">1</span>
<svg class="i" style="left:582.8px;top:1317.4px;width:29px;height:29px;" viewBox="0 0 29 29"><circle cx="14.5" cy="14.500" r="13" stroke="#a2a3bb" stroke-width="1.9" fill="none"/><circle cx="14.5" cy="8.300" r="1.900" fill="#a2a3bb"/><path d="M11.6 12.300 H15.700 V20.500 M11.300 21 H18.600" stroke="#a2a3bb" stroke-width="2.1" fill="none"/></svg>
<svg class="i" style="left:699.5px;top:1324px;width:11px;height:16px;" viewBox="0 0 11 16"><path d="M2 1.800 L8.500 8 L2 14.200" stroke="#9ea0c0" stroke-width="3" fill="none"/></svg>
<div style="left:203.5px;top:1401.3px;width:573.5px;height:1.5px;background:#363a4d;"></div>
<span class="t" style="left:244.6px;top:1442.04px;font:400 29.6px/0 'Liberation Sans', sans-serif;color:#a2a3bb;letter-spacing:-0.350px;">Deployed Contracts</span>
<svg class="i" style="left:717.00px;top:1437.64px;width:19.00px;height:20.73px;" viewBox="0 -1408 1408 1536" preserveAspectRatio="none"><path fill="#8f93b8" transform="scale(1,-1)" d="M512 800C512 818 498 832 480 832H416C398 832 384 818 384 800V224C384 206 398 192 416 192H480C498 192 512 206 512 224ZM768 800C768 818 754 832 736 832H672C654 832 640 818 640 800V224C640 206 654 192 672 192H736C754 192 768 206 768 224ZM1024 800C1024 818 1010 832 992 832H928C910 832 896 818 896 800V224C896 206 910 192 928 192H992C1010 192 1024 206 1024 224ZM1152 76C1152 28 1125 0 1120 0H288C283 0 256 28 256 76V1024H1152V76ZM480 1152 529 1269C532 1273 540 1279 546 1280H863C868 1279 877 1273 880 1269L928 1152ZM1408 1120C1408 1138 1394 1152 1376 1152H1067L997 1319C977 1368 917 1408 864 1408H544C491 1408 431 1368 411 1319L341 1152H32C14 1152 0 1138 0 1120V1056C0 1038 14 1024 32 1024H128V72C128 -38 200 -128 288 -128H1120C1208 -128 1280 -34 1280 76V1024H1376C1394 1024 1408 1038 1408 1056Z"/></svg>
<svg class="i" style="left:253px;top:1514.5px;width:13px;height:20px;" viewBox="0 0 13 20"><path d="M2 2 L10 10 L2 18" stroke="#8f93b8" stroke-width="3.6" fill="none"/></svg>
<span class="t" style="left:289.2px;top:1526.11px;font:400 21.6px/0 'Liberation Sans', sans-serif;color:#a2a3bb;letter-spacing:-1.149px;">COINFLIP AT 0X6DE...DA5D0 (BLOC</span>
<svg class="i" style="left:659.2px;top:1509.7px;width:25.8px;height:29.3px;" viewBox="0 0 25.800 29.300"><g stroke="#9398b8" stroke-width="2.8" fill="none" stroke-linejoin="round"><path d="M10.8 1.400 H19.600 L24.400 6.400 V20 Q24.400 22 22.400 22 H10.800 Q8.800 22 8.800 20 V3.400 Q8.800 1.400 10.800 1.400 Z"/><path d="M17.9 1.400 V7.600 H24.400"/><path d="M8.8 6.600 H3.400 Q1.400 6.600 1.400 8.600 V25.900 Q1.400 27.900 3.400 27.900 H15.300 Q17.300 27.900 17.300 25.900 V22"/></g></svg>
<svg class="i" style="left:728.8px;top:1517.3px;width:15.2px;height:15.4px;" viewBox="0 0 15.200 15.400"><path d="M2 2 L13.200 13.400 M13.200 2 L2 13.400" stroke="#9398b8" stroke-width="3.7" fill="none" stroke-linecap="round"/></svg>
<div style="left:229.5px;top:1570.5px;width:521px;height:1.3px;background:#2f3245;"></div>
<div style="left:778px;top:298px;width:1887px;height:1453px;background:#222335;"></div>
<div style="left:778px;top:360px;width:144px;height:1100px;background:#2a2c3e;"></div>
<div style="left:922.1px;top:1259.8999999999999px;width:1597.9px;height:32.4px;background:#2a2c3e;"></div>
<div class="codewrap" style="left:778px;top:360px;width:1742px;height:1100px;overflow:hidden"><div class="nums" style="left:0;top:-7.300000000000011px;width:97.20000000000005px"><div class="ln">4</div><div class="ln">5</div><div class="ln">6</div><div class="ln">7</div><div class="ln">8</div><div class="ln">9</div><div class="ln">10</div><div class="ln">11</div><div class="ln">12</div><div class="ln">13</div><div class="ln">14</div><div class="ln">15</div><div class="ln">16</div><div class="ln">17</div><div class="ln">18</div><div class="ln">19</div><div class="ln">20</div><div class="ln">21</div><div class="ln">22</div><div class="ln">23</div><div class="ln">24</div><div class="ln">25</div><div class="ln">26</div><div class="ln">27</div><div class="ln">28</div><div class="ln">29</div><div class="ln">30</div><div class="ln">31</div><div class="ln cur">32</div><div class="ln">33</div><div class="ln">34</div><div class="ln">35</div><div class="ln">36</div><div class="ln">37</div><div class="ln">38</div></div><pre class="code" style="left:144.10000000000002px;top:-7.300000000000011px"><div class="cl"><span class="k">contract</span> CoinFlip {</div><div class="cl">    <span class="k">address</span> <span class="g">public</span> player1;</div><div class="cl">    <span class="k">address</span> <span class="g">public</span> player2;</div><div class="cl">    <span class="k">uint256</span> <span class="g">public</span> pot;</div><div class="cl">    <span class="k">uint256</span> <span class="g">public</span> winner;</div><div class="cl">    <span class="k">address</span> <span class="g">public</span> winnerAddress;</div><div class="cl"> </div><div class="cl">    <span class="k">event</span> GameStarted(<span class="k">address</span> <span class="y">indexed</span> player1, <span class="k">address</span> <span class="y">indexed</span> player2, <span class="k">uint256</span> pot);</div><div class="cl">    <span class="k">event</span> GameFinished(<span class="k">address</span> <span class="y">indexed</span> winnerAddress, <span class="k">string</span> winner, <span class="k">uint256</span> pot);</div><div class="cl"> </div><div class="cl">    <span class="k">function</span> enter() <span class="g">public</span> <span class="g">payable</span> {</div><div class="cl">        <span class="m">require</span>(<span class="m">msg</span>.value == <span class="n">.001</span> ether, <span class="s">"Must send .001 ether to enter"</span>);</div><div class="cl">        <span class="y">if</span> (player1 == <span class="k">address</span>(<span class="n">0</span>)) {</div><div class="cl">            player1 = <span class="m">msg</span>.sender;</div><div class="cl">        } <span class="y">else</span> {</div><div class="cl">            <span class="m">require</span>(player2 == <span class="k">address</span>(<span class="n">0</span>), <span class="s">"Both players have already entered"</span>);</div><div class="cl">            player2 = <span class="m">msg</span>.sender;</div><div class="cl">            <span class="k">emit</span> GameStarted(player1, player2, pot);</div><div class="cl">        }</div><div class="cl">        pot += <span class="m">msg</span>.value;</div><div class="cl">        winner = <span class="n">0</span>;</div><div class="cl">        winnerAddress = <span class="k">address</span>(<span class="n">0</span>);</div><div class="cl">    }</div><div class="cl"> </div><div class="cl">    <span class="k">function</span> flipCoin() <span class="g">public</span> {</div><div class="cl">        <span class="m">require</span>(<span class="m">msg</span>.sender == player1 || <span class="m">msg</span>.sender == player2, <span class="s">"Sender is not a player"</span>);</div><div class="cl">        <span class="k">uint256</span> result = <span class="k">uint256</span>(<span class="m">keccak256</span>(<span class="m">abi</span>.encodePacked(<span class="m">block</span>.timestamp, <span class="m">block</span>.difficulty, <span class="m">block</span>.coinbase))) % <span class="n">2</span>;</div><div class="cl">        winner = result == <span class="n">0</span> ? <span class="n">1</span> : <span class="n">2</span>;</div><div class="cl">        winnerAddress = winner == <span class="n">1</span> ? player1 : player2;</div><div class="cl">        <span class="k">string</span> <span class="l">memory</span> winnerName = winner == <span class="n">1</span> ? <span class="s">"player1"</span> : <span class="s">"player2"</span>;</div><div class="cl">        <span class="k">emit</span> GameFinished(winnerAddress, winnerName, pot);</div><div class="cl">        <span class="g">payable</span>(winnerAddress).transfer(pot);</div><div class="cl">        pot = <span class="n">0</span>;</div><div class="cl">        player1 = <span class="k">address</span>(<span class="n">0</span>);</div><div class="cl">        player2 = <span class="k">address</span>(<span class="n">0</span>);</div></pre><div style="left:144.29999999999995px;top:25.099999999999987px;width:1.8px;height:1134.0px;background:#45464f"></div><div style="left:196.29999999999995px;top:349.09999999999997px;width:1.8px;height:356.4px;background:#45464f"></div><div style="left:196.29999999999995px;top:802.7px;width:1.8px;height:356.4px;background:#74757c"></div><div style="left:248.29999999999995px;top:413.9px;width:1.8px;height:32.4px;background:#45464f"></div><div style="left:248.29999999999995px;top:478.7px;width:1.8px;height:97.19999999999999px;background:#45464f"></div></div>
<div style="left:778px;top:298px;width:1887px;height:62px;background:#222335;box-shadow:0 3px 7px rgba(0,0,0,.42);"></div>
<svg class="i" style="left:805px;top:310px;width:32px;height:34px;" viewBox="0 0 32 34"><path d="M4.8 5.300 L25.600 17.200 L4.800 29.200 Z" fill="#5fb78c" stroke="#3a7358" stroke-width="4.6" stroke-linejoin="round"/></svg>
<svg class="i" style="left:868.5px;top:312.7px;width:26px;height:26px" viewBox="-12 -12 26 26"><circle cx="0" cy="0" r="8.2" stroke="#bfc1d6" stroke-width="2.9" fill="none"/><path d="M6.3 6.800 L10.900 11.500" stroke="#bfc1d6" stroke-width="3.7" stroke-linecap="round"/><path d="M-4 0 H4" stroke="#bfc1d6" stroke-width="2.3"/></svg>
<svg class="i" style="left:920.9px;top:312.7px;width:26px;height:26px" viewBox="-12 -12 26 26"><circle cx="0" cy="0" r="8.2" stroke="#bfc1d6" stroke-width="2.9" fill="none"/><path d="M6.3 6.800 L10.900 11.500" stroke="#bfc1d6" stroke-width="3.7" stroke-linecap="round"/><path d="M-4 0 H4" stroke="#bfc1d6" stroke-width="2.3"/><path d="M0 -4 V4" stroke="#bfc1d6" stroke-width="2.3"/></svg>
<svg class="i" style="left:982px;top:313.5px;width:31px;height:28.5px;" viewBox="0 0 31 28.500"><path d="M1.300 10.400 L15.500 1.400 L29.700 10.400" stroke="#d4d5e0" stroke-width="1.4" fill="none"/><path d="M4.800 11.800 L15.500 5 L26.200 11.800 V27 H18.800 V20 H12.200 V27 H4.800 Z" stroke="#d4d5e0" stroke-width="1.4" fill="none"/></svg>
<span class="t" style="left:1023.4px;top:328.58px;font:400 23.7px/0 'Liberation Sans', sans-serif;color:#a7a9c6;letter-spacing:-0.547px;">Home</span>
<div style="left:1134px;top:298.5px;width:214px;height:62px;background:#2a2c3e;border:1.3px solid #3f4255;border-bottom:none;border-radius:4px 4px 0 0;box-sizing:border-box;"></div>
<svg class="i" style="left:1152.3px;top:320px;width:14px;height:21px;" viewBox="0 0 14 21"><g fill="#c4c6d9"><path d="M3.4 0 H10.600 L14 5.300 H7 L3.400 10.600 L0 5.300 Z"/><path d="M10.6 21 H3.400 L0 15.700 H7 L10.600 10.400 L14 15.700 Z"/></g></svg>
<span class="t" style="left:1179.6px;top:328.75px;font:400 23.5px/0 'Liberation Sans', sans-serif;color:#f5f5f9;letter-spacing:-0.273px;">CoinFlip.sol</span>
<svg class="i" style="left:1313.4px;top:319.7px;width:19.6px;height:19.4px;" viewBox="0 0 19.600 19.400"><path d="M2.2 2.200 L17.400 17.200 M17.400 2.200 L2.200 17.200" stroke="#c0c2d6" stroke-width="4.6" fill="none" stroke-linecap="round"/></svg>
<div style="left:2520px;top:360px;width:119px;height:1100px;background:#2a2c3e;"></div>
<div style="left:2639px;top:360px;width:27px;height:1100px;background:#222335;"></div>
<div style="left:2639px;top:360px;width:1px;height:1100px;background:#4a4c5e;"></div>
<div style="left:2640px;top:360px;width:26px;height:1px;background:#3a3c4f;"></div>
<div class="mini" style="left:2520px;top:360px;width:118.5px;height:1100px;overflow:hidden"><div style="left:7.9px;top:62px;width:111px;height:2px;background:#2c4a6e"></div><pre class="code" style="left:7.9px;top:-0.3px;transform:scale(0.07691,0.06173);transform-origin:0 0;opacity:.66;-webkit-text-stroke:5px;font-weight:bold"><div class="cl"><span class="c">// SPDX-License-Identifier: MIT</span></div><div class="cl">pragma solidity ^<span class="n">0</span><span class="n">.8</span><span class="n">.0</span>;</div><div class="cl"> </div><div class="cl"><span class="k">contract</span> CoinFlip {</div><div class="cl">    <span class="k">address</span> <span class="g">public</span> player1;</div><div class="cl">    <span class="k">address</span> <span class="g">public</span> player2;</div><div class="cl">    <span class="k">uint256</span> <span class="g">public</span> pot;</div><div class="cl">    <span class="k">uint256</span> <span class="g">public</span> winner;</div><div class="cl">    <span class="k">address</span> <span class="g">public</span> winnerAddress;</div><div class="cl"> </div><div class="cl">    <span class="k">event</span> GameStarted(<span class="k">address</span> <span class="y">indexed</span> player1, <span class="k">address</span> <span class="y">indexed</span> player2, <span class="k">uint256</span> pot);</div><div class="cl">    <span class="k">event</span> GameFinished(<span class="k">address</span> <span class="y">indexed</span> winnerAddress, <span class="k">string</span> winner, <span class="k">uint256</span> pot);</div><div class="cl"> </div><div class="cl">    <span class="k">function</span> enter() <span class="g">public</span> <span class="g">payable</span> {</div><div class="cl">        <span class="m">require</span>(<span class="m">msg</span>.value == <span class="n">.001</span> ether, <span class="s">"Must send .001 ether to enter"</span>);</div><div class="cl">        <span class="y">if</span> (player1 == <span class="k">address</span>(<span class="n">0</span>)) {</div><div class="cl">            player1 = <span class="m">msg</span>.sender;</div><div class="cl">        } <span class="y">else</span> {</div><div class="cl">            <span class="m">require</span>(player2 == <span class="k">address</span>(<span class="n">0</span>), <span class="s">"Both players have already entered"</span>);</div><div class="cl">            player2 = <span class="m">msg</span>.sender;</div><div class="cl">            <span class="k">emit</span> GameStarted(player1, player2, pot);</div><div class="cl">        }</div><div class="cl">        pot += <span class="m">msg</span>.value;</div><div class="cl">        winner = <span class="n">0</span>;</div><div class="cl">        winnerAddress = <span class="k">address</span>(<span class="n">0</span>);</div><div class="cl">    }</div><div class="cl"> </div><div class="cl">    <span class="k">function</span> flipCoin() <span class="g">public</span> {</div><div class="cl">        <span class="m">require</span>(<span class="m">msg</span>.sender == player1 || <span class="m">msg</span>.sender == player2, <span class="s">"Sender is not a player"</span>);</div><div class="cl">        <span class="k">uint256</span> result = <span class="k">uint256</span>(<span class="m">keccak256</span>(<span class="m">abi</span>.encodePacked(<span class="m">block</span>.timestamp, <span class="m">block</span>.difficulty, <span class="m">block</span>.coinbase))) % <span class="n">2</span>;</div><div class="cl">        winner = result == <span class="n">0</span> ? <span class="n">1</span> : <span class="n">2</span>;</div><div class="cl">        winnerAddress = winner == <span class="n">1</span> ? player1 : player2;</div><div class="cl">        <span class="k">string</span> <span class="l">memory</span> winnerName = winner == <span class="n">1</span> ? <span class="s">"player1"</span> : <span class="s">"player2"</span>;</div><div class="cl">        <span class="k">emit</span> GameFinished(winnerAddress, winnerName, pot);</div><div class="cl">        <span class="g">payable</span>(winnerAddress).transfer(pot);</div><div class="cl">        pot = <span class="n">0</span>;</div><div class="cl">        player1 = <span class="k">address</span>(<span class="n">0</span>);</div><div class="cl">        player2 = <span class="k">address</span>(<span class="n">0</span>);</div><div class="cl">    }</div><div class="cl">}</div></pre></div>
<div style="left:2641px;top:825.3px;width:25px;height:2.2px;background:#8f90a0;"></div>
<div style="left:778px;top:1460.5px;width:1887px;height:63.7px;background:#2a2c3e;"></div>
<div style="left:778px;top:1524.2px;width:1887px;height:227px;background:#222335;"></div>
<svg class="i" style="left:792.4px;top:1482px;width:14px;height:17.5px;" viewBox="0 0 14 17.5"><path d="M1.6 1.600 L7 7 L12.400 1.600 M1.600 9.600 L7 15 L12.400 9.600" stroke="#b4b8d6" stroke-width="3.1" fill="none"/></svg>
<svg class="i" style="left:834.5px;top:1481.3px;width:22.2px;height:22.2px;" viewBox="0 0 22.200 22.200"><circle cx="11.1" cy="11.100" r="9.700" stroke="#b4b8d6" stroke-width="2.5" fill="none"/><path d="M4.4 4.400 L17.800 17.800" stroke="#b4b8d6" stroke-width="2.5"/></svg>
<span class="t" style="left:885.3px;top:1492.12px;font:400 23.3px/0 'Liberation Sans', sans-serif;color:#a2a3bb;">0</span>
<div style="left:941.1px;top:1478.2px;width:29px;height:28.4px;background:#2e3044;border-radius:4.5px;border:1.5px solid #4b4d62;box-sizing:border-box;"></div>
<span class="t" style="left:985.3px;top:1495.32px;font:400 23.6px/0 'Liberation Sans', sans-serif;color:#a2a3bb;letter-spacing:0.096px;">listen on all transactions</span>
<svg class="i" style="left:1314.50px;top:1480.80px;width:21.20px;height:21.20px;" viewBox="0 -1408 1664 1664" preserveAspectRatio="none"><path fill="#b4b8d6" transform="scale(1,-1)" d="M1152 704C1152 457 951 256 704 256C457 256 256 457 256 704C256 951 457 1152 704 1152C951 1152 1152 951 1152 704ZM1664 -128C1664 -94 1650 -61 1627 -38L1284 305C1365 422 1408 562 1408 704C1408 1093 1093 1408 704 1408C315 1408 0 1093 0 704C0 315 315 0 704 0C846 0 986 43 1103 124L1446 -218C1469 -242 1502 -256 1536 -256C1606 -256 1664 -198 1664 -128Z"/></svg>
<div style="left:1355px;top:1470px;width:507.7px;height:46.6px;background:#33354a;border-radius:3px;border:1.3px solid #44475b;box-sizing:border-box;"></div>
<span class="t" style="left:1377.6px;top:1492.19px;font:400 25.4px/0 'Liberation Sans', sans-serif;color:#8587a0;letter-spacing:-0.068px;">Search with transaction hash or address</span>
<span class="t" style="left:851.3px;top:1559.35px;font:400 19.2px/0 'DejaVu Sans Mono', 'Liberation Mono', monospace;color:#c6c7d6;">creation of CoinFlip pending...</span>
<div style="left:850.4px;top:1631.1px;width:35.2px;height:35.2px;background:#5fb78c;border-radius:50%;"></div>
<svg class="i" style="left:857.5px;top:1640.5px;width:21px;height:17px;" viewBox="0 0 21 17"><path d="M2.2 8.700 L8 14.300 L18.800 3" stroke="#222335" stroke-width="4.2" fill="none"/></svg>
<span class="t" style="left:921.6px;top:1638.88px;font:700 19.6px/0 'Liberation Mono', monospace;color:#a9abc6;letter-spacing:1.012px;-webkit-text-stroke:0;">[block:540150 txIndex:0]</span>
<span class="t" style="left:1250.9px;top:1638.88px;font:700 19.6px/0 'Liberation Mono', monospace;color:#a9abc6;letter-spacing:1.011px;-webkit-text-stroke:0;">from:</span>
<span class="t" style="left:1328.2px;top:1638.88px;font:400 19.6px/0 'Liberation Mono', monospace;color:#a9abc6;letter-spacing:1.012px;">0x1A1...44575</span>
<span class="t" style="left:1505.6px;top:1638.88px;font:700 19.6px/0 'Liberation Mono', monospace;color:#a9abc6;letter-spacing:1.010px;-webkit-text-stroke:0;">to:</span>
<span class="t" style="left:1556.4px;top:1638.88px;font:400 19.6px/0 'Liberation Mono', monospace;color:#a9abc6;letter-spacing:1.011px;">CoinFlip.(constructor)</span>
<span class="t" style="left:1851.7px;top:1638.88px;font:700 19.6px/0 'Liberation Mono', monospace;color:#a9abc6;letter-spacing:1.010px;-webkit-text-stroke:0;">value:</span>
<span class="t" style="left:1942.8px;top:1638.88px;font:400 19.6px/0 'Liberation Mono', monospace;color:#a9abc6;letter-spacing:1.011px;">0 wei</span>
<span class="t" style="left:2016px;top:1638.88px;font:700 19.6px/0 'Liberation Mono', monospace;color:#a9abc6;letter-spacing:1.011px;-webkit-text-stroke:0;">data:</span>
<span class="t" style="left:2094.7px;top:1638.88px;font:400 19.6px/0 'Liberation Mono', monospace;color:#a9abc6;letter-spacing:1.012px;">0x608...70033</span>
<span class="t" style="left:2271.2px;top:1638.88px;font:700 19.6px/0 'Liberation Mono', monospace;color:#a9abc6;letter-spacing:1.011px;-webkit-text-stroke:0;">logs:</span>
<span class="t" style="left:2349.4px;top:1638.88px;font:400 19.6px/0 'Liberation Mono', monospace;color:#a9abc6;letter-spacing:1.004px;">0</span>
<span class="t" style="left:921.6px;top:1664.68px;font:700 19.6px/0 'Liberation Mono', monospace;color:#a9abc6;letter-spacing:1.011px;-webkit-text-stroke:0;">hash:</span>
<span class="t" style="left:998.8px;top:1664.68px;font:400 19.6px/0 'Liberation Mono', monospace;color:#a9abc6;letter-spacing:1.012px;">0x96b...1f0e2</span>
<div style="left:2444px;top:1625.9px;width:96px;height:49.1px;background:#3478a2;border-radius:3px;"></div>
<span class="t" style="left:2459.8px;top:1650.85px;font:700 18.6px/0 'Liberation Mono', monospace;color:#ffffff;letter-spacing:1.741px;-webkit-text-stroke:0;">Debug</span>
<svg class="i" style="left:2557.8px;top:1640.5px;width:21px;height:14px;" viewBox="0 0 21 14"><path d="M2 2.200 L10.500 10.700 L19 2.200" stroke="#a9abc8" stroke-width="4.2" fill="none"/></svg>
<div style="left:2638px;top:1530.4px;width:13.8px;height:136.4px;background:#3b3d52;border-radius:7px;"></div>
<span class="t" style="left:793.2px;top:1723.35px;font:400 19.2px/0 'DejaVu Sans Mono', 'Liberation Mono', monospace;color:#c6c7d6;">&gt;</span>
</div><div id="ring"></div></div>
</body></html>
